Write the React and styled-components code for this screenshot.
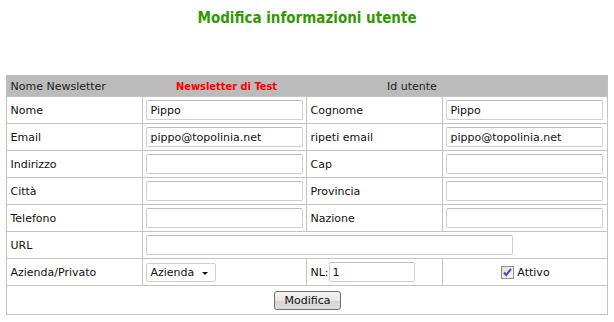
import styled, { createGlobalStyle } from 'styled-components';

const GlobalStyle = createGlobalStyle`
    body {
        margin: 0;
        background: #fff;
        font-family: 'DejaVu Sans', Verdana, sans-serif;
        font-size: 11px;
        color: #111;
    }
`;

export default function App() {
    return (
        <>
            <GlobalStyle />
            <Page>
                <Title>Modifica informazioni utente</Title>
                <FormTable>
                    <colgroup>
                        <col style={{ width: 136 }} />
                        <col style={{ width: 164 }} />
                        <col style={{ width: 136 }} />
                        <col style={{ width: 164 }} />
                    </colgroup>
                    <thead>
                        <HeadRow>
                            <HeadCell>Nome Newsletter</HeadCell>
                            <HeadCell $align='center' $red>
                                Newsletter di Test
                            </HeadCell>
                            <HeadCell colSpan={2} $indent='80px'>
                                Id utente
                            </HeadCell>
                        </HeadRow>
                    </thead>
                    <tbody>
                        <Row>
                            <Cell>Nome</Cell>
                            <Cell><TextInput defaultValue='Pippo' /></Cell>
                            <Cell>Cognome</Cell>
                            <Cell><TextInput defaultValue='Pippo' /></Cell>
                        </Row>
                        <Row>
                            <Cell>Email</Cell>
                            <Cell><TextInput defaultValue='pippo@topolinia.net' /></Cell>
                            <Cell>ripeti email</Cell>
                            <Cell><TextInput defaultValue='pippo@topolinia.net' /></Cell>
                        </Row>
                        <Row>
                            <Cell>Indirizzo</Cell>
                            <Cell><TextInput /></Cell>
                            <Cell>Cap</Cell>
                            <Cell><TextInput /></Cell>
                        </Row>
                        <Row>
                            <Cell>Città</Cell>
                            <Cell><TextInput /></Cell>
                            <Cell>Provincia</Cell>
                            <Cell><TextInput /></Cell>
                        </Row>
                        <Row>
                            <Cell>Telefono</Cell>
                            <Cell><TextInput /></Cell>
                            <Cell>Nazione</Cell>
                            <Cell><TextInput /></Cell>
                        </Row>
                        <Row>
                            <Cell>URL</Cell>
                            <Cell colSpan={3}><TextInput $width='367px' /></Cell>
                        </Row>
                        <Row>
                            <Cell>Azienda/Privato</Cell>
                            <Cell>
                                <SelectBox>
                                    <span>Azienda</span>
                                    <Caret />
                                </SelectBox>
                            </Cell>
                            <Cell>
                                <Inline>
                                    NL:
                                    <TextInput $width='86px' defaultValue='1' />
                                </Inline>
                            </Cell>
                            <Cell $align='center'>
                                <CheckLabel>
                                    <CheckBox width='13' height='13' viewBox='0 0 13 13'>
                                        <defs>
                                            <linearGradient id='cbg' x1='0' y1='0' x2='1' y2='1'>
                                                <stop offset='0' stopColor='#dcdcdc' />
                                                <stop offset='1' stopColor='#fbfbfb' />
                                            </linearGradient>
                                        </defs>
                                        <rect x='0.5' y='0.5' width='12' height='12' fill='url(#cbg)' stroke='#8e8f8f' />
                                        <path d='M3 6.5 L5.2 9.2 L10 2.8' fill='none' stroke='#3a50a8' strokeWidth='2' />
                                    </CheckBox>
                                    Attivo
                                </CheckLabel>
                            </Cell>
                        </Row>
                        <Row $height='29px'>
                            <Cell colSpan={4} $align='center'>
                                <Button type='button'>Modifica</Button>
                            </Cell>
                        </Row>
                    </tbody>
                </FormTable>
            </Page>
        </>
    );
}

const Page = styled.div`
    width: 614px;
    padding-top: 8px;
`;

const Title = styled.h1`
    margin: 0 0 47px;
    text-align: center;
    font-family: 'DejaVu Sans Condensed', 'DejaVu Sans', sans-serif;
    font-weight: bold;
    font-size: 15px;
    line-height: 20px;
    color: #339900;
`;

const FormTable = styled.table`
    width: 600px;
    margin: 0 auto;
    border-collapse: collapse;
    table-layout: fixed;
    border: 1px solid #bdbdbd;
`;

const HeadRow = styled.tr`
    height: 21px;
    background: #bbbbbb;
`;

const HeadCell = styled.th`
    padding: 0 0 0 ${(p) => p.$indent || '3px'};
    text-align: ${(p) => p.$align || 'left'};
    font-family: ${(p) => (p.$red ? "'DejaVu Sans Condensed', 'DejaVu Sans', sans-serif" : 'inherit')};
    font-weight: ${(p) => (p.$red ? 'bold' : 'normal')};
    color: ${(p) => (p.$red ? '#ff0000' : '#222')};
    white-space: nowrap;
`;

const Row = styled.tr`
    height: ${(p) => p.$height || '27px'};
`;

const Cell = styled.td`
    border: 1px solid #c3c3c3;
    padding: 0 2px 0 3px;
    text-align: ${(p) => p.$align || 'left'};
    vertical-align: middle;
    white-space: nowrap;
`;

const TextInput = styled.input`
    box-sizing: border-box;
    display: block;
    width: ${(p) => p.$width || '157px'};
    height: 20px;
    margin: 0;
    padding: 0 3px;
    border: 1px solid #cfcfcf;
    border-top-color: #bdbdbd;
    border-radius: 2px;
    font-family: inherit;
    font-size: 11px;
    color: #111;
    background: #fff;
    outline: none;
`;

const Inline = styled.div`
    display: flex;
    align-items: center;
    gap: 0;
`;

const SelectBox = styled.div`
    position: relative;
    box-sizing: border-box;
    width: 70px;
    height: 19px;
    padding: 0 3px;
    display: flex;
    align-items: center;
    border: 1px solid #cfcfcf;
    border-radius: 2px;
    background: #fff;
`;

const Caret = styled.span`
    position: absolute;
    right: 7px;
    top: 8px;
    width: 0;
    height: 0;
    border-left: 3px solid transparent;
    border-right: 3px solid transparent;
    border-top: 3px solid #111;
`;

const CheckLabel = styled.label`
    display: inline-flex;
    align-items: center;
    gap: 3px;
    padding-top: 3px;
`;

const CheckBox = styled.svg`
    display: block;
`;

const Button = styled.button`
    box-sizing: border-box;
    width: 67px;
    height: 19px;
    padding: 0;
    font-family: inherit;
    font-size: 11px;
    color: #111;
    border: 1px solid #707070;
    border-radius: 3px;
    background: linear-gradient(#f4f4f4, #e6e6e6 50%, #d6d6d6 51%, #dcdcdc);
`;
